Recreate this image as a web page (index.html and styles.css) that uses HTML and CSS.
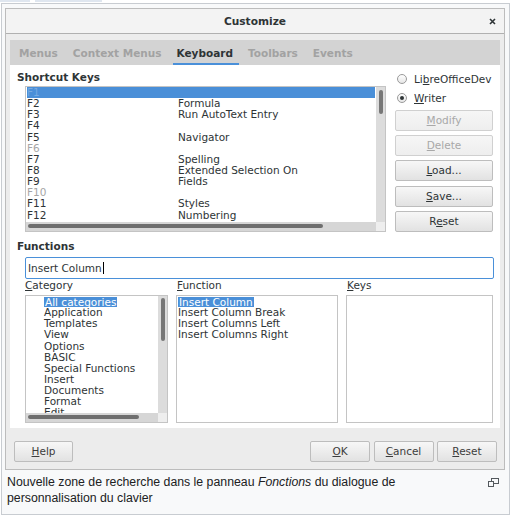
FILE: index.html
```html
<!DOCTYPE html>
<html>
<head>
<meta charset="utf-8">
<title>Customize</title>
<link rel="stylesheet" href="styles.css">
</head>
<body>
<div class="frag"><span class="f1"></span><span class="f2"></span></div>
<div class="thumb">
  <div class="dialog">
    <div class="titlebar">
      <span></span>
      <span class="title">Customize</span>
      <span class="close"><svg width="7" height="7" viewBox="0 0 7 7"><path d="M1 1L6 6M6 1L1 6" stroke="#2e3436" stroke-width="1.6"/></svg></span>
    </div>
    <div class="dbody">
      <div class="tabs">
        <span class="tab">Menus</span>
        <span class="tab">Context Menus</span>
        <span class="tab active">Keyboard</span>
        <span class="tab">Toolbars</span>
        <span class="tab">Events</span>
      </div>
      <div class="panel">
        <div class="top">
          <div class="left">
            <div class="heading">Shortcut Keys</div>
            <div class="listbox keys">
              <div class="row sel"><span class="k">F1</span><span></span></div>
              <div class="row"><span class="k">F2</span><span>Formula</span></div>
              <div class="row"><span class="k">F3</span><span>Run AutoText Entry</span></div>
              <div class="row"><span class="k">F4</span><span></span></div>
              <div class="row"><span class="k">F5</span><span>Navigator</span></div>
              <div class="row dim"><span class="k">F6</span><span></span></div>
              <div class="row"><span class="k">F7</span><span>Spelling</span></div>
              <div class="row"><span class="k">F8</span><span>Extended Selection On</span></div>
              <div class="row"><span class="k">F9</span><span>Fields</span></div>
              <div class="row dim"><span class="k">F10</span><span></span></div>
              <div class="row"><span class="k">F11</span><span>Styles</span></div>
              <div class="row"><span class="k">F12</span><span>Numbering</span></div>
              <div class="row"><span class="k">F13</span><span></span></div>
              <div class="vscroll"><div class="vbar big"></div></div>
              <div class="hscroll"><div class="hbar wide"></div></div>
              <div class="corner"></div>
            </div>
          </div>
          <div class="side">
            <div class="radio"><span class="circle"></span><span>Li<u>b</u>reOfficeDev</span></div>
            <div class="radio"><span class="circle on"></span><span><u>W</u>riter</span></div>
            <div class="btns">
              <div class="btn dis"><u>M</u>odify</div>
              <div class="btn dis"><u>D</u>elete</div>
              <div class="btn"><u>L</u>oad...</div>
              <div class="btn"><u>S</u>ave...</div>
              <div class="btn">R<u>e</u>set</div>
            </div>
          </div>
        </div>
        <div class="heading fh">Functions</div>
        <div class="search">Insert Column<span class="caret"></span></div>
        <div class="cols">
          <div class="col">
            <div class="lbl"><u>C</u>ategory</div>
            <div class="listbox box cat">
              <div class="item"><span class="hl">All categories</span></div>
              <div class="item">Application</div>
              <div class="item">Templates</div>
              <div class="item">View</div>
              <div class="item">Options</div>
              <div class="item">BASIC</div>
              <div class="item">Special Functions</div>
              <div class="item">Insert</div>
              <div class="item">Documents</div>
              <div class="item">Format</div>
              <div class="item">Edit</div>
              <div class="vscroll"><div class="vbar tall"></div></div>
              <div class="hscroll"><div class="hbar mid"></div></div>
              <div class="corner"></div>
            </div>
          </div>
          <div class="col">
            <div class="lbl fl"><u>F</u>unction</div>
            <div class="listbox box fn">
              <div class="item"><span class="hl">Insert Column</span></div>
              <div class="item">Insert Column Break</div>
              <div class="item">Insert Columns Left</div>
              <div class="item">Insert Columns Right</div>
            </div>
          </div>
          <div class="col">
            <div class="lbl fl"><u>K</u>eys</div>
            <div class="listbox box"></div>
          </div>
        </div>
      </div>
    </div>
    <div class="footer">
      <div class="btn fbtn"><u>H</u>elp</div>
      <div class="fright">
        <div class="btn fbtn"><u>O</u>K</div>
        <div class="btn fbtn"><u>C</u>ancel</div>
        <div class="btn fbtn"><u>R</u>eset</div>
      </div>
    </div>
  </div>
  <div class="caption">
    <span class="magnify"><svg width="11" height="9" viewBox="0 0 11 9"><rect x="3.5" y="0.5" width="7" height="5" fill="none" stroke="#54595d"/><rect x="0.5" y="3.5" width="5" height="5" fill="#f8f9fa" stroke="#54595d"/></svg></span>
    <span>Nouvelle zone de recherche dans le panneau <i>Fonctions</i> du dialogue de personnalisation du clavier</span>
  </div>
</div>
</body>
</html>
```
FILE: styles.css
```css
* { box-sizing: border-box; }
html, body { margin: 0; padding: 0; background: #fff; }
body { font-family: "DejaVu Sans", sans-serif; }

.frag { height: 2px; margin-bottom: 1px; display: flex; gap: 5px; }
.frag span { display: block; height: 2px; background: #dfe6ef; }
.frag .f1 { width: 30px; }
.frag .f2 { width: 67px; }

.thumb {
  margin-left: 1px;
  width: 509px;
  border: 1px solid #c8ccd1;
  background: #f8f9fa;
  padding: 3px 4px 4px 3px;
}

.dialog {
  margin-top: 1px;
  width: 500px;
  border: 1px solid #bcbcbc;
  background: #ececec;
  color: #2e3436;
  font-size: 10.5px;
}

.titlebar {
  height: 25px;
  background: #f3f3f3;
  border-bottom: 1px solid #b0b0b0;
  display: grid;
  grid-template-columns: 1fr auto 1fr;
  align-items: center;
}
.title { font-weight: bold; font-size: 10.6px; }
.close { justify-self: end; margin-right: 8px; display: flex; margin-top: 1px; }

.dbody { padding: 6px 4px 0; }

.tabs {
  height: 25px;
  background: #d3d3d3;
  display: flex;
  align-items: stretch;
  padding-left: 9px;
  gap: 15px;
  font-weight: bold;
  color: #a2a2a2;
}
.tab { display: flex; align-items: center; position: relative; }
.tab.active { color: #2e3436; }
.tab.active::after {
  content: "";
  position: absolute;
  left: -4px;
  right: -6px;
  bottom: 0;
  height: 2px;
  background: #4a90d9;
}

.panel {
  background: #fff;
  height: 363px;
  padding: 0 6px 0 15px;
}

.top {
  display: grid;
  grid-template-columns: 361px 98px;
  column-gap: 9px;
}

.heading {
  font-weight: bold;
  line-height: 12px;
  margin: 6px 0 3px -8px;
}
.heading.fh { margin: 8px 0 5px -8px; }

.listbox {
  border: 1px solid #c4c4c4;
  background: #fff;
  position: relative;
  overflow: hidden;
}
.keys { height: 146px; padding-left: 1px; }

.row {
  height: 11.15px;
  line-height: 11.15px;
  white-space: nowrap;
  display: flex;
  margin-right: 10px;
}
.row .k { width: 151px; }
.row.sel { background: #4a8fd8; color: rgba(255,255,255,0.25); }
.row.dim { color: #a6a6a6; }

.vscroll {
  position: absolute;
  right: 0;
  top: 0;
  bottom: 9px;
  width: 9px;
  background: #dcdcdc;
}
.vbar {
  position: absolute;
  left: 3px;
  width: 4px;
  background: #777;
  border-radius: 2px;
}
.vbar.big { top: 3px; height: 24px; }
.vbar.tall { top: 2px; height: 43px; }

.hscroll {
  position: absolute;
  left: 0;
  right: 9px;
  bottom: 0;
  height: 9px;
  background: #d6d6d6;
}
.hbar {
  position: absolute;
  left: 2px;
  top: 2px;
  height: 4px;
  background: #6e6e6e;
  border-radius: 2px;
}
.hbar.wide { width: 295px; }
.hbar.mid { width: 111px; }

.corner {
  position: absolute;
  right: 0;
  bottom: 0;
  width: 9px;
  height: 9px;
  background: #eeeeee;
}

.side { padding-top: 4px; }
.radio {
  height: 19.5px;
  display: flex;
  align-items: center;
  gap: 7px;
  padding-left: 2px;
}
.circle {
  width: 10px;
  height: 10px;
  border-radius: 50%;
  border: 1px solid #9a9a9a;
  background: linear-gradient(#ffffff, #e6e6e6);
  display: flex;
  align-items: center;
  justify-content: center;
}
.circle.on::after {
  content: "";
  width: 4px;
  height: 4px;
  border-radius: 50%;
  background: #2e3436;
}
.btns {
  margin-top: 1.5px;
  display: flex;
  flex-direction: column;
  gap: 4.4px;
}

.btn {
  height: 21px;
  line-height: 19px;
  text-align: center;
  border: 1px solid #bdbdbd;
  border-radius: 2px;
  background: linear-gradient(#f7f7f7, #e2e2e2);
  color: #2e3436;
}
.btn.dis {
  background: linear-gradient(#f6f6f6, #eeeeee);
  border-color: #d0d0d0;
  color: #a8a8a8;
}

.search {
  height: 22px;
  border: 1px solid #4a90d9;
  border-radius: 2px;
  padding-left: 2px;
  line-height: 20px;
  display: flex;
  align-items: center;
}
.caret {
  display: inline-block;
  width: 1px;
  height: 12px;
  background: #000;
  margin-left: 1px;
}

.cols {
  display: grid;
  grid-template-columns: 143px 162px 147px;
  column-gap: 8px;
}
.lbl {
  line-height: 11px;
  margin-top: 1px;
}
.lbl.fl { padding-left: 1px; }
.box { height: 128px; margin-top: 4px; }
.cat { padding-left: 18px; }
.fn { padding-left: 1px; }
.item {
  height: 11.15px;
  line-height: 11.15px;
  white-space: nowrap;
}
.hl {
  display: inline-block;
  background: #4a8fd8;
  color: #fff;
  padding: 0 1px;
  height: 10px;
  line-height: 11px;
  margin-top: 1px;
  vertical-align: top;
}

.footer {
  height: 41px;
  display: flex;
  justify-content: space-between;
  align-items: flex-start;
  padding: 13px 7px 0 8px;
}
.fbtn { width: 60px; color: #3c3c3c; }
.footer > .fbtn { width: 59px; }
.fright { display: flex; gap: 3.5px; }

.caption {
  font-family: "Liberation Sans", Arial, sans-serif;
  font-size: 12.3px;
  line-height: 16.8px;
  color: #202122;
  padding: 3.6px 0 3px 2px;
}
.magnify {
  float: right;
  margin: 4px 6px 0 6px;
  display: flex;
}
```
